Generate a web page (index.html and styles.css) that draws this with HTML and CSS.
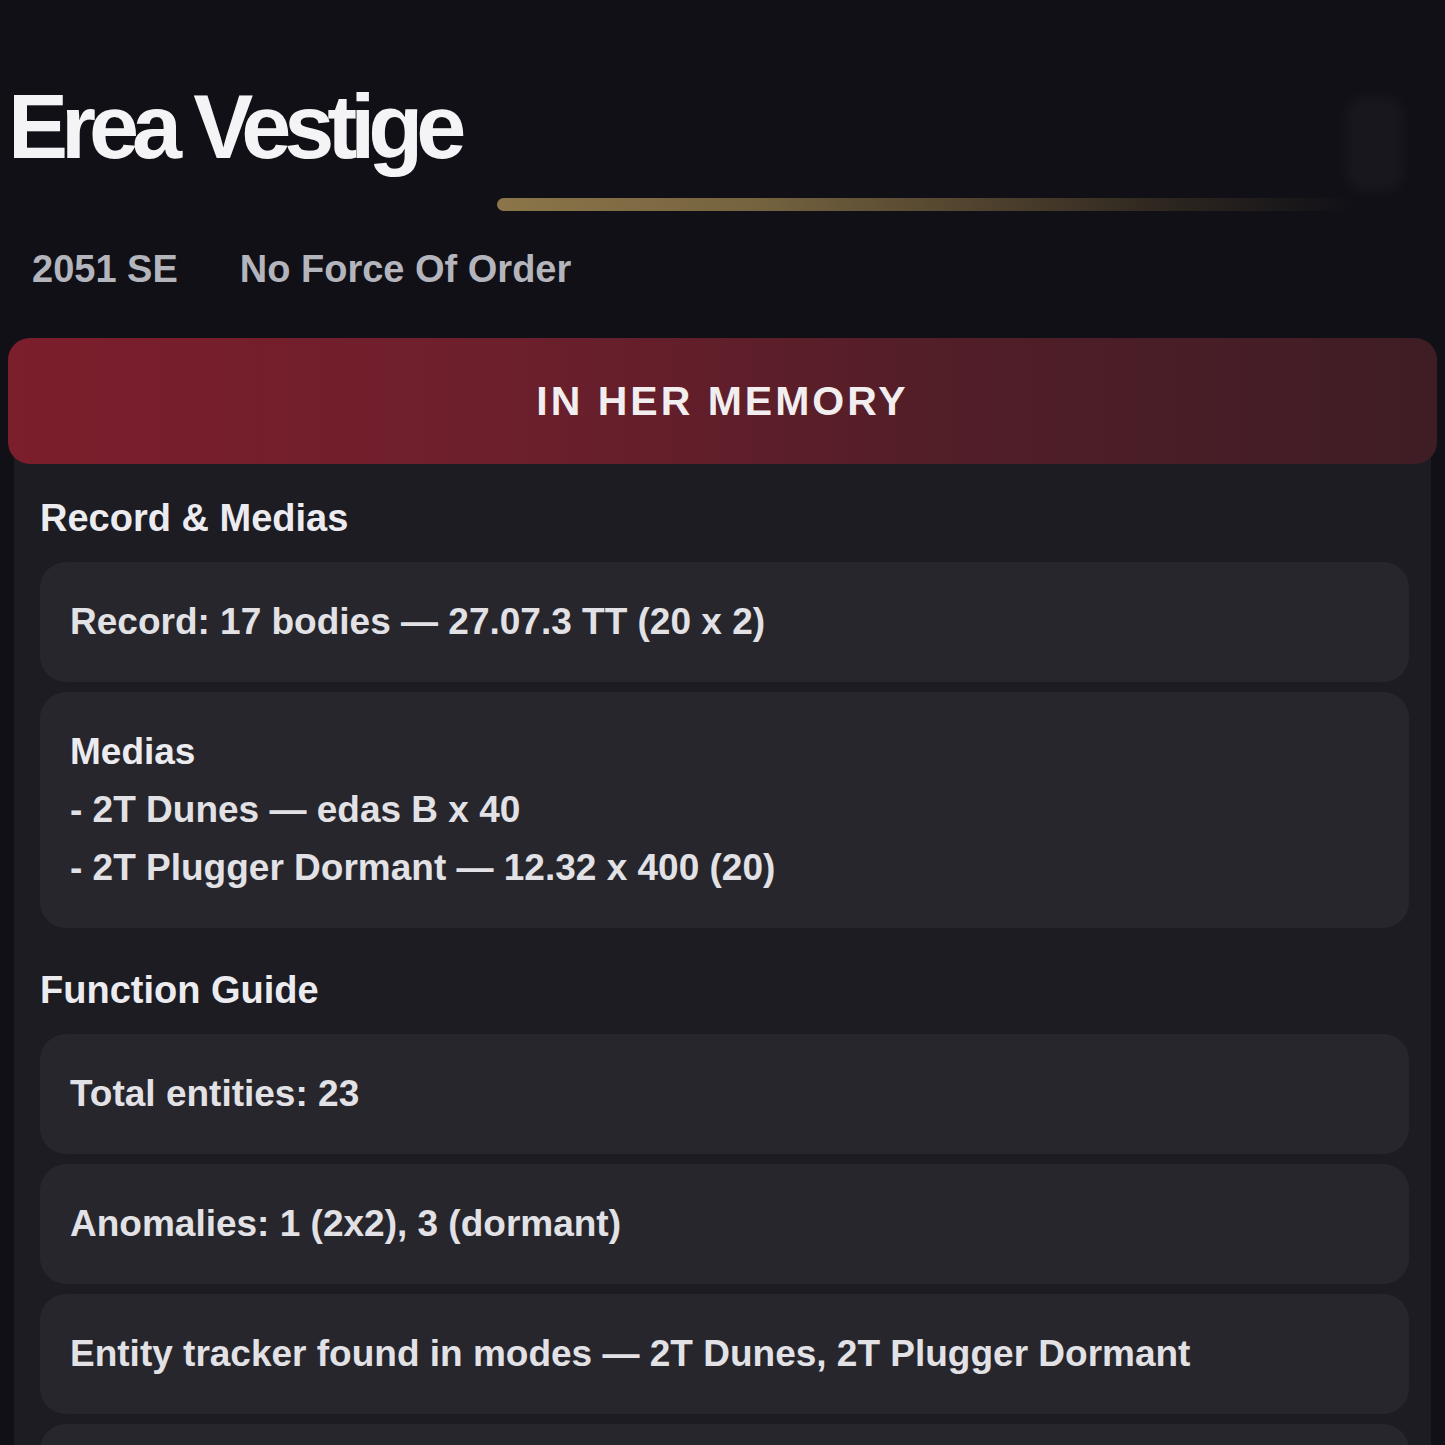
FILE: index.html
```html
<!DOCTYPE html>
<html lang="en">
<head>
<meta charset="utf-8">
<title>Erea Vestige</title>
<link rel="stylesheet" href="styles.css">
</head>
<body>
<header class="top">
  <div class="title-row">
    <h1 class="title">Erea Vestige</h1>
    <div class="rule"></div>
  </div>
  <div class="ghost-btn" aria-hidden="true"></div>
</header>
<div class="meta">
  <span class="meta-item">2051 SE</span>
  <span class="meta-item">No Force Of Order</span>
</div>
<main class="panel">
  <div class="banner">IN HER MEMORY</div>
  <section class="section">
    <h2 class="section-title">Record &amp; Medias</h2>
    <div class="card">Record: 17 bodies — 27.07.3 TT (20 x 2)</div>
    <div class="card">
      <div class="card-head">Medias</div>
      <div>- 2T Dunes — edas B x 40</div>
      <div>- 2T Plugger Dormant — 12.32 x 400 (20)</div>
    </div>
  </section>
  <section class="section">
    <h2 class="section-title">Function Guide</h2>
    <div class="card">Total entities: 23</div>
    <div class="card">Anomalies: 1 (2x2), 3 (dormant)</div>
    <div class="card">Entity tracker found in modes — 2T Dunes, 2T Plugger Dormant</div>
    <div class="card">&nbsp;</div>
  </section>
</main>
</body>
</html>
```
FILE: styles.css
```css
* { box-sizing: border-box; }
html, body { margin: 0; padding: 0; }
body {
  background: #111017;
  color: #ffffff;
  font-family: "Liberation Sans", Arial, sans-serif;
  font-weight: 700;
  overflow: hidden;
  height: 1445px;
}
.top {
  display: flex;
  align-items: flex-start;
  padding: 72px 40px 0 8px;
}
.title-row {
  flex: 1;
  display: flex;
  align-items: flex-end;
}
.title {
  margin: 0;
  font-size: 90px;
  line-height: 110px;
  letter-spacing: -7px;
  color: #f4f4f6;
  white-space: nowrap;
}
.rule {
  flex: 1;
  height: 13px;
  margin: 0 -10px -29px 38px;
  border-radius: 7px;
  background: linear-gradient(90deg, #8b7549 0%, #75633f 30%, #4a3d2b 60%, #2a241e 80%, rgba(17,16,23,0) 100%);
}
.ghost-btn {
  width: 60px;
  height: 96px;
  margin-top: 24px;
  border-radius: 20px;
  background: rgba(255,255,255,0.03);
  filter: blur(6px);
}
.meta {
  display: flex;
  gap: 62px;
  padding: 52px 0 0 32px;
  font-size: 38px;
  line-height: 50px;
  color: #b4b4bc;
}
.panel {
  margin: 44px 14px 0 14px;
  background: #1d1c22;
  border-radius: 22px 22px 0 0;
  padding-bottom: 40px;
  min-height: 1100px;
}
.banner {
  height: 126px;
  display: flex;
  align-items: center;
  justify-content: center;
  margin: 0 -6px;
  border-radius: 22px;
  background: linear-gradient(90deg, #7c1e2c 0%, #6d1f2c 35%, #521e28 65%, #3f1d25 100%);
  font-size: 41px;
  letter-spacing: 3px;
  color: #f2eef0;
}
.section {
  padding: 28px 22px 0 26px;
  display: flex;
  flex-direction: column;
  gap: 10px;
}
.section + .section { padding-top: 36px; }
.section-title {
  margin: 0 0 8px 0;
  font-size: 38px;
  line-height: 52px;
  color: #ececf0;
}
.card {
  background: #27262c;
  border-radius: 26px;
  padding: 31px 30px;
  font-size: 37px;
  line-height: 58px;
  color: #e2e2e6;
}
.card-head { color: #ececf0; }
```
